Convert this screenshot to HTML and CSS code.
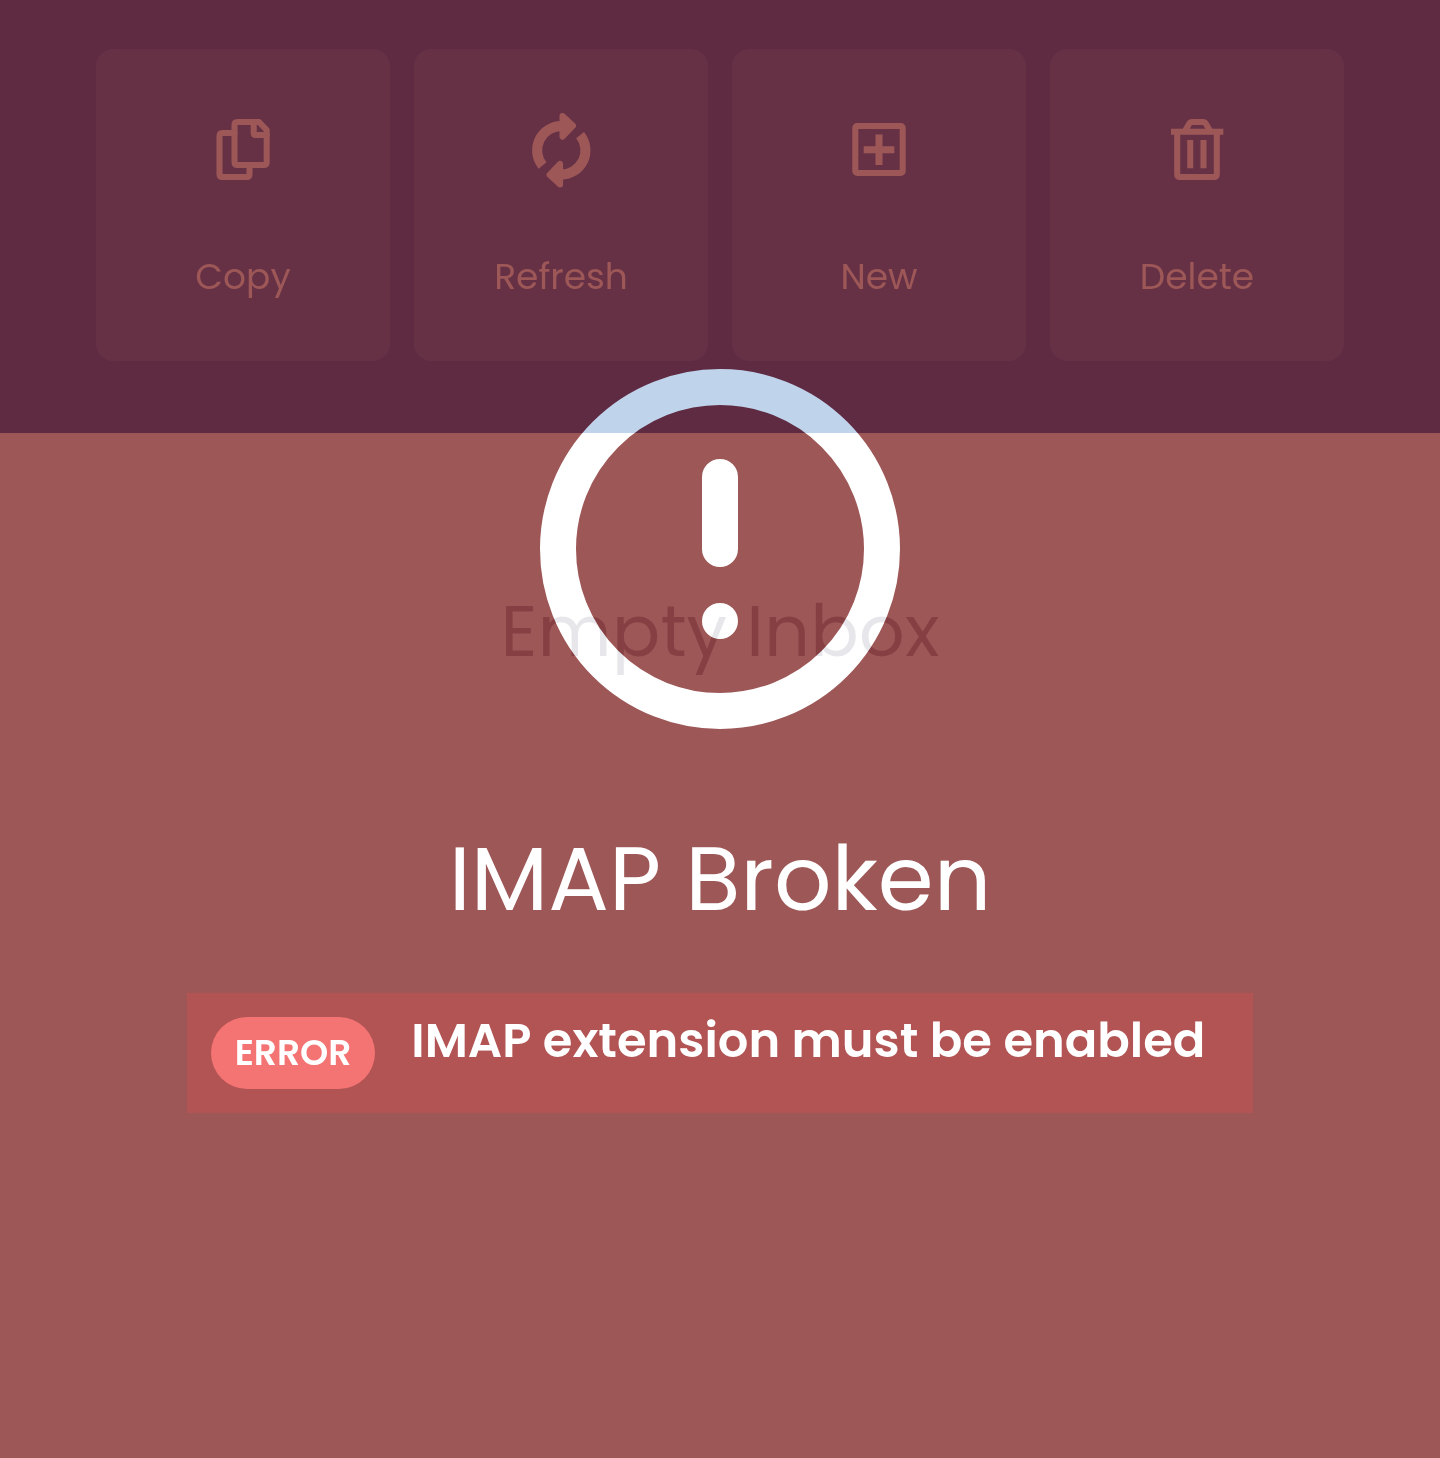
FILE: index.html
```html
<!DOCTYPE html>
<html lang="en">
<head>
<meta charset="utf-8">
<meta name="viewport" content="width=device-width, initial-scale=1">
<title>Inbox</title>
<link rel="stylesheet" href="styles.css">
</head>
<body>
<div class="stack">
  <section class="fault" role="alert">
    <svg class="fault-icon" viewBox="-2 -2 24 24" aria-hidden="true">
      <circle cx="10" cy="10" r="9" fill="none" stroke="currentColor" stroke-width="2"/>
      <rect x="9" y="5" width="2" height="6" rx="1" fill="currentColor"/>
      <circle cx="10" cy="14" r="1" fill="currentColor"/>
    </svg>
    <h1 class="fault-title">IMAP Broken</h1>
    <div class="notice">
      <span class="notice-tag">ERROR</span>
      <span class="notice-text">IMAP extension must be enabled</span>
    </div>
  </section>
  <main class="app">
    <nav class="actions">
      <button class="action" type="button">
        <svg class="action-icon" viewBox="0 0 90 90" aria-hidden="true">
          <path d="M36.500 28H24.500q-3 0-3 3v38q0 3 3 3h24q3 0 3-3v-9"/>
          <path d="M39.500 17h21.500l7.700 8v32q0 3-3 3h-26.200q-3 0-3-3V20q0-3 3-3z"/>
          <path d="M55.700 17v11q0 2 2 2h11"/>
        </svg>
        <span>Copy</span>
      </button>
      <button class="action" type="button">
        <svg class="action-icon" viewBox="0 0 90 90" aria-hidden="true">
          <g id="arrow">
            <path class="arc" d="M26.500 60.500A24.300 24.300 0 0 1 46 21"/>
            <path class="head" d="M46.500 11l10.500 9.700-10.500 11z"/>
          </g>
          <use href="#arrow" transform="rotate(180 45.300 45.300)"/>
        </svg>
        <span>Refresh</span>
      </button>
      <button class="action" type="button">
        <svg class="action-icon" viewBox="0 0 90 90" aria-hidden="true">
          <rect x="21.300" y="21" width="47.400" height="47" rx="2"/>
          <path class="plus" d="M45 29.500v30.500M29.700 44.700h30.600"/>
        </svg>
        <span>New</span>
      </button>
      <button class="action" type="button">
        <svg class="action-icon" viewBox="0 0 90 90" aria-hidden="true">
          <path d="M25.200 27v42q0 3 3 3h33.600q3 0 3-3V27M33 26l4-7q1-2 3-2h11q2 0 3 2l4 7"/>
          <path class="flat" d="M19 26.700h52.300M38.200 35v28.300M51.500 35v28.300"/>
        </svg>
        <span>Delete</span>
      </button>
    </nav>
    <p class="empty">Empty Inbox</p>
  </main>
</div>
</body>
</html>
```

FILE: styles.css
```css
* {
  box-sizing: border-box;
}

body {
  margin: 0;
  background: #9e5757;
  font-family: Poppins, Inter, "Open Sans", sans-serif;
}

.stack {
  display: grid;
  min-height: 100vh;
  background: #9e5757;
  isolation: isolate;
}

.fault,
.app {
  grid-area: 1 / 1;
  min-width: 0;
}

.fault {
  display: flex;
  flex-direction: column;
  align-items: center;
  justify-content: center;
  gap: 48px;
  padding-bottom: 12px;
  color: #fff;
}

.fault-icon {
  width: 432px;
  height: 432px;
}

.fault-title {
  margin: 0;
  font-size: 90px;
  font-weight: 400;
  line-height: 132px;
}

.notice {
  display: flex;
  align-items: flex-start;
  gap: 36px;
  padding: 24px 48px 24px 24px;
  background: #b15453;
  font-weight: 600;
}

.notice-tag {
  padding: 0 24px;
  border-radius: 36px;
  background: #f47373;
  font-size: 36px;
  line-height: 72px;
}

.notice-text {
  font-size: 48px;
  line-height: 48px;
}

/* The app is inverted over the fault screen, so black reads as transparent. */
.app {
  display: flex;
  flex-direction: column;
  background: #000;
  mix-blend-mode: difference;
}

.actions {
  display: grid;
  grid-template-columns: repeat(4, 1fr);
  gap: 24px;
  padding: 49px 96px 72px;
  background: #402c14;
}

.action {
  display: flex;
  flex-direction: column;
  align-items: center;
  gap: 54px;
  padding: 56px 24px 57px;
  border: 0;
  border-radius: 18px;
  background: #382612;
  color: #000;
  font-family: inherit;
  font-size: 36px;
  line-height: 55px;
}

.action-icon {
  width: 90px;
  height: 90px;
  fill: none;
  stroke: currentColor;
  stroke-width: 6;
  stroke-linecap: round;
  stroke-linejoin: round;
}

.action-icon .arc {
  stroke-width: 10;
  stroke-linecap: butt;
}

.action-icon .head {
  fill: currentColor;
}

.action-icon .plus {
  stroke-width: 7;
  stroke-linecap: butt;
}

.action-icon .flat {
  stroke-linecap: butt;
}

.empty {
  margin: 0;
  padding-top: 144px;
  color: #181814;
  font-size: 72px;
  line-height: 108px;
  text-align: center;
}
```
